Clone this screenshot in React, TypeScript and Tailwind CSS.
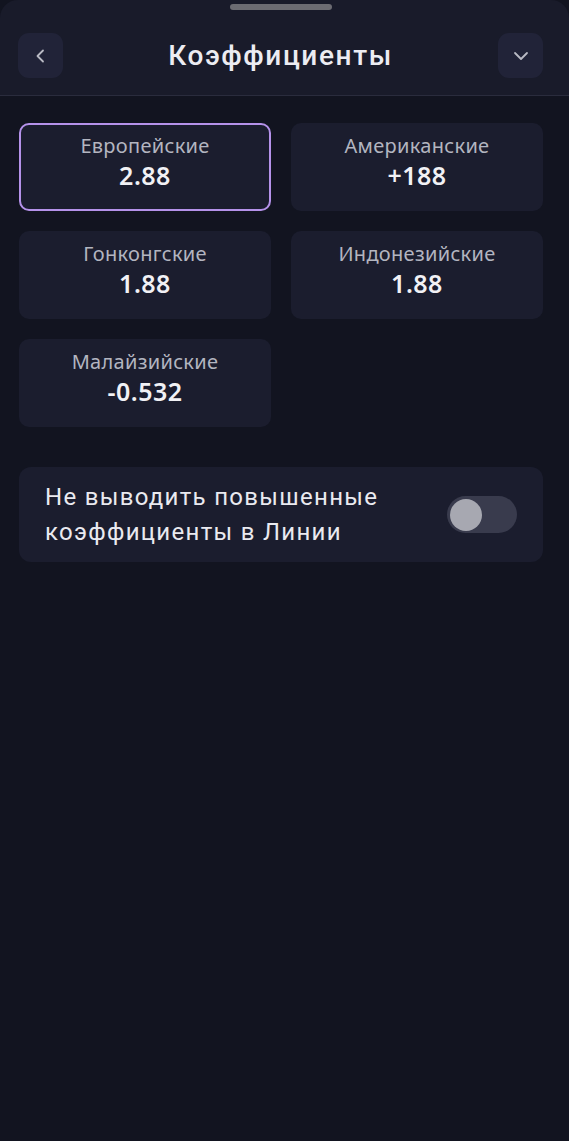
import React from "react";

function Card({ label, value, selected }: { label: string; value: string; selected?: boolean }) {
  return (
    <div
      className={
        "h-[88px] rounded-[10px] bg-[#1b1d2e] flex flex-col items-center justify-center pb-[9px] " +
        (selected ? "border-2 border-[#b592ea]" : "")
      }
    >
      <div className="text-[20px] leading-[24px] text-[#b3b5c0] font-['Noto_Sans',sans-serif] tracking-[0.3px]">{label}</div>
      <div className="text-[25px] leading-[31px] font-semibold text-[#f1f1f5] font-['Noto_Sans',sans-serif] mt-[2px] tracking-[0.5px]">{value}</div>
    </div>
  );
}

export default function App() {
  return (
    <div className="w-[569px] h-[1141px] bg-[#121420] font-['Roboto',sans-serif] overflow-hidden">
      <div className="relative h-[96px] bg-[#191b2a] border-b border-[#2a2c3d] rounded-t-[18px]">
        <div className="absolute left-[230px] top-[4px] w-[102px] h-[6px] rounded-full bg-[#6c6c72]" />
        <div className="flex items-center justify-between pl-[18px] pr-[26px] pt-[33px]">
          <button className="w-[45px] h-[45px] rounded-[11px] bg-[#212338] flex items-center justify-center">
            <svg width="20" height="20" viewBox="0 0 20 20" fill="none">
              <path d="M12 4.5 L6.5 10 L12 15.5" stroke="#b9bac4" strokeWidth="1.8" strokeLinecap="round" strokeLinejoin="round" />
            </svg>
          </button>
          <div className="text-[28px] font-medium text-[#ececf2] tracking-[1.6px]">Коэффициенты</div>
          <button className="w-[45px] h-[45px] rounded-[11px] bg-[#212338] flex items-center justify-center">
            <svg width="20" height="20" viewBox="0 0 20 20" fill="none">
              <path d="M4 7 L10 13 L16 7" stroke="#b9bac4" strokeWidth="1.8" strokeLinecap="round" strokeLinejoin="round" />
            </svg>
          </button>
        </div>
      </div>
      <div className="pl-[19px] pr-[26px] pt-[27px]">
        <div className="grid grid-cols-2 gap-x-[20px] gap-y-[20px]">
          <Card label="Европейские" value="2.88" selected />
          <Card label="Американские" value="+188" />
          <Card label="Гонконгские" value="1.88" />
          <Card label="Индонезийские" value="1.88" />
          <Card label="Малайзийские" value="-0.532" />
        </div>
        <div className="mt-[40px] h-[95px] rounded-[12px] bg-[#1b1d2e] flex items-center justify-between pl-[26px] pr-[26px]">
          <div className="text-[24px] leading-[35px] text-[#eaeaf0] tracking-[1.3px]">
            Не выводить повышенные
            <br />
            коэффициенты в Линии
          </div>
          <div className="w-[70px] h-[37px] rounded-full bg-[#393b4d] flex items-center px-[3px]">
            <div className="w-[32px] h-[32px] rounded-full bg-[#a7a8b1]" />
          </div>
        </div>
      </div>
    </div>
  );
}
